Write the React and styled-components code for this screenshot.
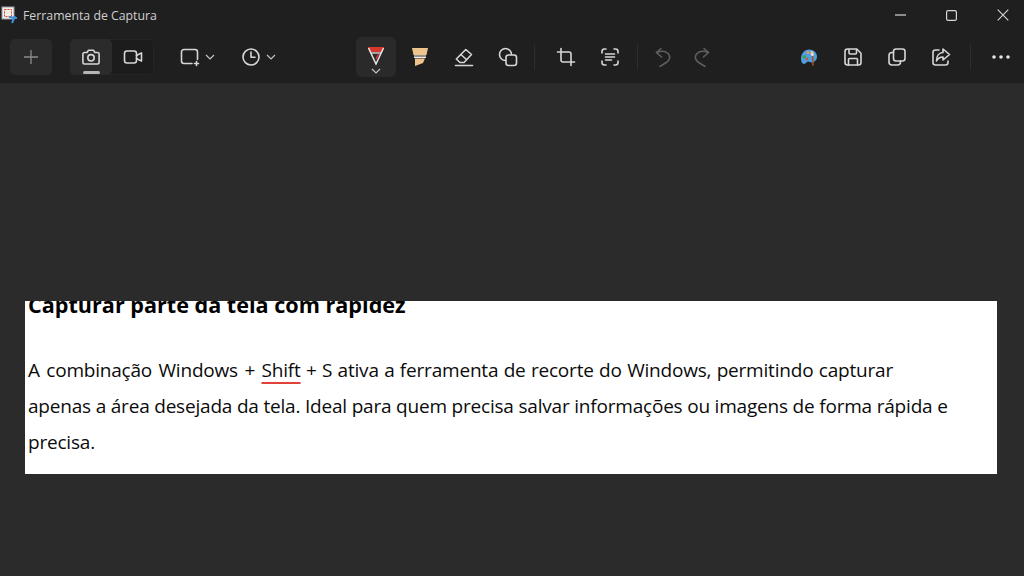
import React from 'react';
import styled, {createGlobalStyle} from 'styled-components';

const iconColor = '#d6d6d6';
const dimColor = '#5f5f5f';

const GlobalStyle = createGlobalStyle`
  html, body {
    margin: 0;
    padding: 0;
    background: #2b2b2b;
    font-family: "Open Sans", "Noto Sans", sans-serif;
  }
`;

const Page = styled.div`
  width: 1024px;
  height: 576px;
  overflow: hidden;
  display: flex;
  flex-direction: column;
  background: #2b2b2b;
`;

const Header = styled.div`
  height: 83px;
  background: #1f1f1f;
  display: flex;
  flex-direction: column;
`;

const TitleBar = styled.div`
  height: 30px;
  display: flex;
  align-items: center;
`;

const AppIcon = styled.svg`
  width: 20px;
  height: 20px;
  margin-left: 1px;
  flex: none;
`;

const Title = styled.span`
  margin-left: 2px;
  font-size: 12.3px;
  color: #cfcfcf;
`;

const WindowControls = styled.div`
  margin-left: auto;
  margin-right: -4px;
  display: flex;
`;

const WindowButton = styled.div`
  width: 51px;
  height: 30px;
  display: flex;
  align-items: center;
  justify-content: center;
  color: ${iconColor};
`;

const Toolbar = styled.div`
  flex: 1;
  display: flex;
  align-items: center;
  padding-left: 10px;
`;

const PlusButton = styled.div`
  width: 42px;
  height: 36px;
  border-radius: 5px;
  background: #2a2a2a;
  display: flex;
  align-items: center;
  justify-content: center;
  color: #8d8d8d;
`;

const Segment = styled.div`
  margin-left: 18px;
  width: 84px;
  height: 36px;
  border-radius: 5px;
  background: #1c1c1c;
  box-shadow: inset 0 0 0 1px #252525;
  display: flex;
`;

const SegmentItem = styled.div`
  position: relative;
  width: 42px;
  height: 36px;
  border-radius: 5px;
  display: flex;
  align-items: center;
  justify-content: center;
  background: ${(props) => (props.$active ? '#2b2b2b' : 'transparent')};
`;

const ActiveBar = styled.span`
  position: absolute;
  left: 13px;
  bottom: 1px;
  width: 17px;
  height: 3px;
  border-radius: 2px;
  background: #b5b5b5;
`;

const Picker = styled.div`
  margin-left: ${(props) => props.$left}px;
  display: flex;
  align-items: center;
  gap: 5px;
`;

const ToolGroup = styled.div`
  margin-left: ${(props) => props.$left || 0}px;
  display: flex;
  align-items: center;
`;

const Tool = styled.div`
  position: relative;
  width: ${(props) => props.$width || 44}px;
  height: 40px;
  display: flex;
  align-items: center;
  justify-content: center;
`;

const ActiveTool = styled(Tool)`
  background: #2a2a2a;
  border-radius: 6px;
  width: 40px;
  margin: 0 2px;
  padding-bottom: 2px;
  box-sizing: border-box;
`;

const PenChevron = styled.svg`
  position: absolute;
  left: 15px;
  bottom: 3px;
`;

const Divider = styled.span`
  margin-left: ${(props) => props.$left || 4}px;
  margin-right: ${(props) => props.$right || 4}px;
  width: 1px;
  height: 26px;
  background: #2d2d2d;
`;

const Canvas = styled.div`
  flex: 1;
  padding-top: 218px;
  padding-left: 25px;
`;

const Snip = styled.div`
  width: 972px;
  height: 173px;
  box-sizing: border-box;
  padding: 0 3px;
  overflow: hidden;
  background: #fff;
  color: #0b0b0b;
`;

const Heading = styled.h2`
  margin: -11px 0 0;
  font-size: 21.6px;
  line-height: 30px;
  font-weight: 700;
  color: #000;
  white-space: nowrap;
`;

const Paragraph = styled.div`
  margin-top: 32px;
  font-size: 19px;
  letter-spacing: -0.2px;
  line-height: 36.2px;
  white-space: nowrap;
`;

const Line = styled.div`
  word-spacing: ${(props) => props.$wordSpace || 0}px;
`;

const Lead = styled.span`
  word-spacing: 1.7px;
`;

const Misspelled = styled.span`
  text-decoration: underline;
  text-decoration-color: #e0413a;
  text-decoration-thickness: 1.5px;
  text-underline-offset: 5px;
`;

const Icon = ({size = 20, color = iconColor, width = 1.6, children}) => (
  <svg
    width={size}
    height={size}
    viewBox="0 0 20 20"
    fill="none"
    stroke={color}
    strokeWidth={width}
    strokeLinecap="round"
    strokeLinejoin="round"
  >
    {children}
  </svg>
);

const Chevron = () => (
  <svg width="10" height="6" viewBox="0 0 10 6" fill="none" stroke="#c4c4c4" strokeWidth="1.2">
    <path d="M1 1l4 4 4-4" />
  </svg>
);

const App = () => (
  <Page>
    <GlobalStyle />
    <Header>
      <TitleBar>
        <AppIcon viewBox="0 0 20 20">
          <rect x="1" y="2" width="12" height="12" fill="#f2efe8" stroke="#9aa0a8" />
          <rect x="3.5" y="4.5" width="7" height="7" fill="none" stroke="#d8452c" strokeDasharray="2 1" />
          <path d="M8 12l8 1M11 18l3-7" stroke="#3f8fd6" strokeWidth="2" fill="none" />
        </AppIcon>
        <Title>Ferramenta de Captura</Title>
        <WindowControls>
          <WindowButton>
            <svg width="11" height="2" viewBox="0 0 11 2">
              <path d="M0 1h11" stroke="currentColor" strokeWidth="1.2" />
            </svg>
          </WindowButton>
          <WindowButton>
            <svg width="11" height="11" viewBox="0 0 11 11" fill="none">
              <rect x=".6" y=".6" width="9.8" height="9.8" rx="1.5" stroke="currentColor" strokeWidth="1.2" />
            </svg>
          </WindowButton>
          <WindowButton>
            <svg width="12" height="12" viewBox="0 0 12 12">
              <path d="M.7.7l10.6 10.6M11.3.7L.7 11.3" stroke="currentColor" strokeWidth="1.1" />
            </svg>
          </WindowButton>
        </WindowControls>
      </TitleBar>
      <Toolbar>
        <PlusButton>
          <svg width="16" height="16" viewBox="0 0 16 16">
            <path d="M8 1v14M1 8h14" stroke="currentColor" strokeWidth="1.3" />
          </svg>
        </PlusButton>
        <Segment>
          <SegmentItem $active>
            <Icon>
              <path d="M3.5 5.5h2.6l1.3-2.2h5.2l1.3 2.2h2.6a1.6 1.6 0 0 1 1.6 1.6v8.3a1.6 1.6 0 0 1-1.6 1.6h-13a1.6 1.6 0 0 1-1.6-1.6V7.1a1.6 1.6 0 0 1 1.6-1.6z" />
              <circle cx="10" cy="10.8" r="3.2" />
            </Icon>
            <ActiveBar />
          </SegmentItem>
          <SegmentItem>
            <Icon>
              <rect x="1.5" y="4" width="12" height="12" rx="2.4" />
              <path d="M13.5 8.5l5-2.6v8.2l-5-2.6" />
            </Icon>
          </SegmentItem>
        </Segment>
        <Picker $left={26}>
          <Icon>
            <path d="M12 16.5H4a2.5 2.5 0 0 1-2.5-2.500V5A2.500 2.500 0 0 1 4 2.500h11A2.500 2.500 0 0 1 17.500 5v7.500" />
            <path d="M16.500 14.500v4M14.500 16.500h4" />
          </Icon>
          <Chevron />
        </Picker>
        <Picker $left={26}>
          <Icon>
            <circle cx="10" cy="10" r="8" />
            <path d="M10 5v5.300h4" />
          </Icon>
          <Chevron />
        </Picker>
        <ToolGroup $left={78}>
          <ActiveTool>
            <svg width="18" height="20" viewBox="0 0 18 20" fill="none">
              <path d="M1 1h16l-1.500 5H2.500z" fill="#d8372c" />
              <path d="M1.500 2l7.500 16 7.500-16" stroke="#e6e6e6" strokeWidth="1.500" />
              <path d="M4 7h10" stroke="#e6e6e6" strokeWidth="1.300" />
              <path d="M9 13l2.500-5" stroke="#d8372c" strokeWidth="1.500" />
            </svg>
            <PenChevron width="10" height="6" viewBox="0 0 10 6" fill="none" stroke="#c4c4c4" strokeWidth="1.200">
              <path d="M1 1l4 4 4-4" />
            </PenChevron>
          </ActiveTool>
          <Tool>
            <svg width="18" height="19" viewBox="0 0 18 19">
              <path d="M1 1h16l-1.500 7H2.500z" fill="#eec48c" />
              <path d="M3 8h12v3H3z" fill="#efefef" />
              <path d="M3 9h12" stroke="#333" strokeWidth="1" />
              <path d="M4 11.500h10L12 16l-8 3z" fill="#eec48c" />
            </svg>
          </Tool>
          <Tool>
            <Icon>
              <path d="M11.800 2.500l5.700 5-7.500 8H6L2.300 12z" />
              <path d="M6.800 7.500l5.700 5" />
              <path d="M1.500 18.500h17" />
            </Icon>
          </Tool>
          <Tool>
            <Icon>
              <circle cx="7.500" cy="7.500" r="6" />
              <rect x="8" y="8" width="10.500" height="10.500" rx="2.500" fill="#1f1f1f" />
            </Icon>
          </Tool>
        </ToolGroup>
        <Divider $right={9} />
        <ToolGroup>
          <Tool>
            <Icon>
              <path d="M5 1.500V13a2 2 0 0 0 2 2h11.500" />
              <path d="M1.500 5H13a2 2 0 0 1 2 2v11.500" />
            </Icon>
          </Tool>
          <Tool>
            <Icon>
              <path d="M2 6V4.500A2.500 2.500 0 0 1 4.500 2H6M14 2h1.500A2.500 2.500 0 0 1 18 4.500V6M18 14v1.500a2.500 2.500 0 0 1-2.500 2.500H14M6 18H4.500A2.500 2.500 0 0 1 2 15.500V14" />
              <path d="M5.500 7h9M5.500 10h9M5.500 13h6" />
            </Icon>
          </Tool>
        </ToolGroup>
        <Divider $left={5} $right={5} />
        <ToolGroup>
          <Tool $width={40}>
            <Icon color={dimColor}>
              <path d="M8 1.500L3.500 5.500 8.500 10" />
              <path d="M3.500 5.500c4-1.500 9-1.500 11.500 1 3 3 1.500 6.500-1 8.500L7 19.500" />
            </Icon>
          </Tool>
          <Tool $width={38}>
            <Icon color={dimColor}>
              <path d="M12 1.500l4.500 4L11.500 10" />
              <path d="M16.500 5.500c-4-1.500-9-1.500-11.500 1-3 3-1.500 6.500 1 8.500l7 4.500" />
            </Icon>
          </Tool>
        </ToolGroup>
        <ToolGroup $left={66}>
          <Tool>
            <svg width="18" height="18" viewBox="0 0 18 18">
              <path d="M9 1.500c4.500 0 8 3 8 7 0 3.500-2.500 6-5.500 6-1.500 0-2-1-3.500-1s-2 2.500-4 2.500S1 13.500 1 10.500C1 5.500 4.500 1.500 9 1.500z" fill="#4f9fe0" />
              <circle cx="4.500" cy="9" r="1.800" fill="#3fa34d" />
              <circle cx="8" cy="4.500" r="1.500" fill="#e89a5a" />
              <circle cx="12" cy="4.500" r="1.500" fill="#f0c48a" />
              <circle cx="7" cy="11" r="1.300" fill="#d8503c" />
              <path d="M12.500 7l.5 10.500" stroke="#a0562c" strokeWidth="1.600" />
              <circle cx="12.300" cy="6.500" r="1.500" fill="#eee0c8" />
            </svg>
          </Tool>
          <Tool>
            <Icon>
              <path d="M2 4.500A2.500 2.500 0 0 1 4.500 2h9.300L18 6.200v9.300a2.500 2.500 0 0 1-2.500 2.500h-11A2.500 2.500 0 0 1 2 15.500z" />
              <path d="M6 2.500v3.500a1 1 0 0 0 1 1h5.500a1 1 0 0 0 1-1V2.500" />
              <path d="M5.500 18v-5.500a1 1 0 0 1 1-1h7a1 1 0 0 1 1 1V18" />
            </Icon>
          </Tool>
          <Tool>
            <Icon>
              <rect x="6.500" y="2" width="11.500" height="12" rx="2.500" />
              <path d="M6.500 5.500H5A3 3 0 0 0 2 8.500V15a3 3 0 0 0 3 3h5.500a3 3 0 0 0 3-3v-1" />
            </Icon>
          </Tool>
          <Tool>
            <Icon>
              <path d="M8 3H4.500A2.500 2.500 0 0 0 2 5.500v10A2.500 2.500 0 0 0 4.500 18h10a2.500 2.500 0 0 0 2.500-2.500V14" />
              <path d="M12 2l6.500 5.500L12 13v-3c-3 0-5 1-6.500 4 0-5 2.500-8.500 6.500-8.500z" />
            </Icon>
          </Tool>
        </ToolGroup>
        <Divider $left={7} $right={8} />
        <Tool>
          <svg width="18" height="4" viewBox="0 0 18 4" fill="#e6e6e6">
            <circle cx="2" cy="2" r="1.800" />
            <circle cx="9" cy="2" r="1.800" />
            <circle cx="16" cy="2" r="1.800" />
          </svg>
        </Tool>
      </Toolbar>
    </Header>
    <Canvas>
      <Snip>
        <Heading>Capturar parte da tela com rapidez</Heading>
        <Paragraph>
          <Line $wordSpace={0.65}>
            <Lead>A combinação Windows + </Lead>
            <Misspelled>Shift</Misspelled> + S ativa a ferramenta de recorte do Windows, permitindo capturar
          </Line>
          <Line>apenas a área desejada da tela. Ideal para quem precisa salvar informações ou imagens de forma rápida e</Line>
          <Line>precisa.</Line>
        </Paragraph>
      </Snip>
    </Canvas>
  </Page>
);

export default App;
